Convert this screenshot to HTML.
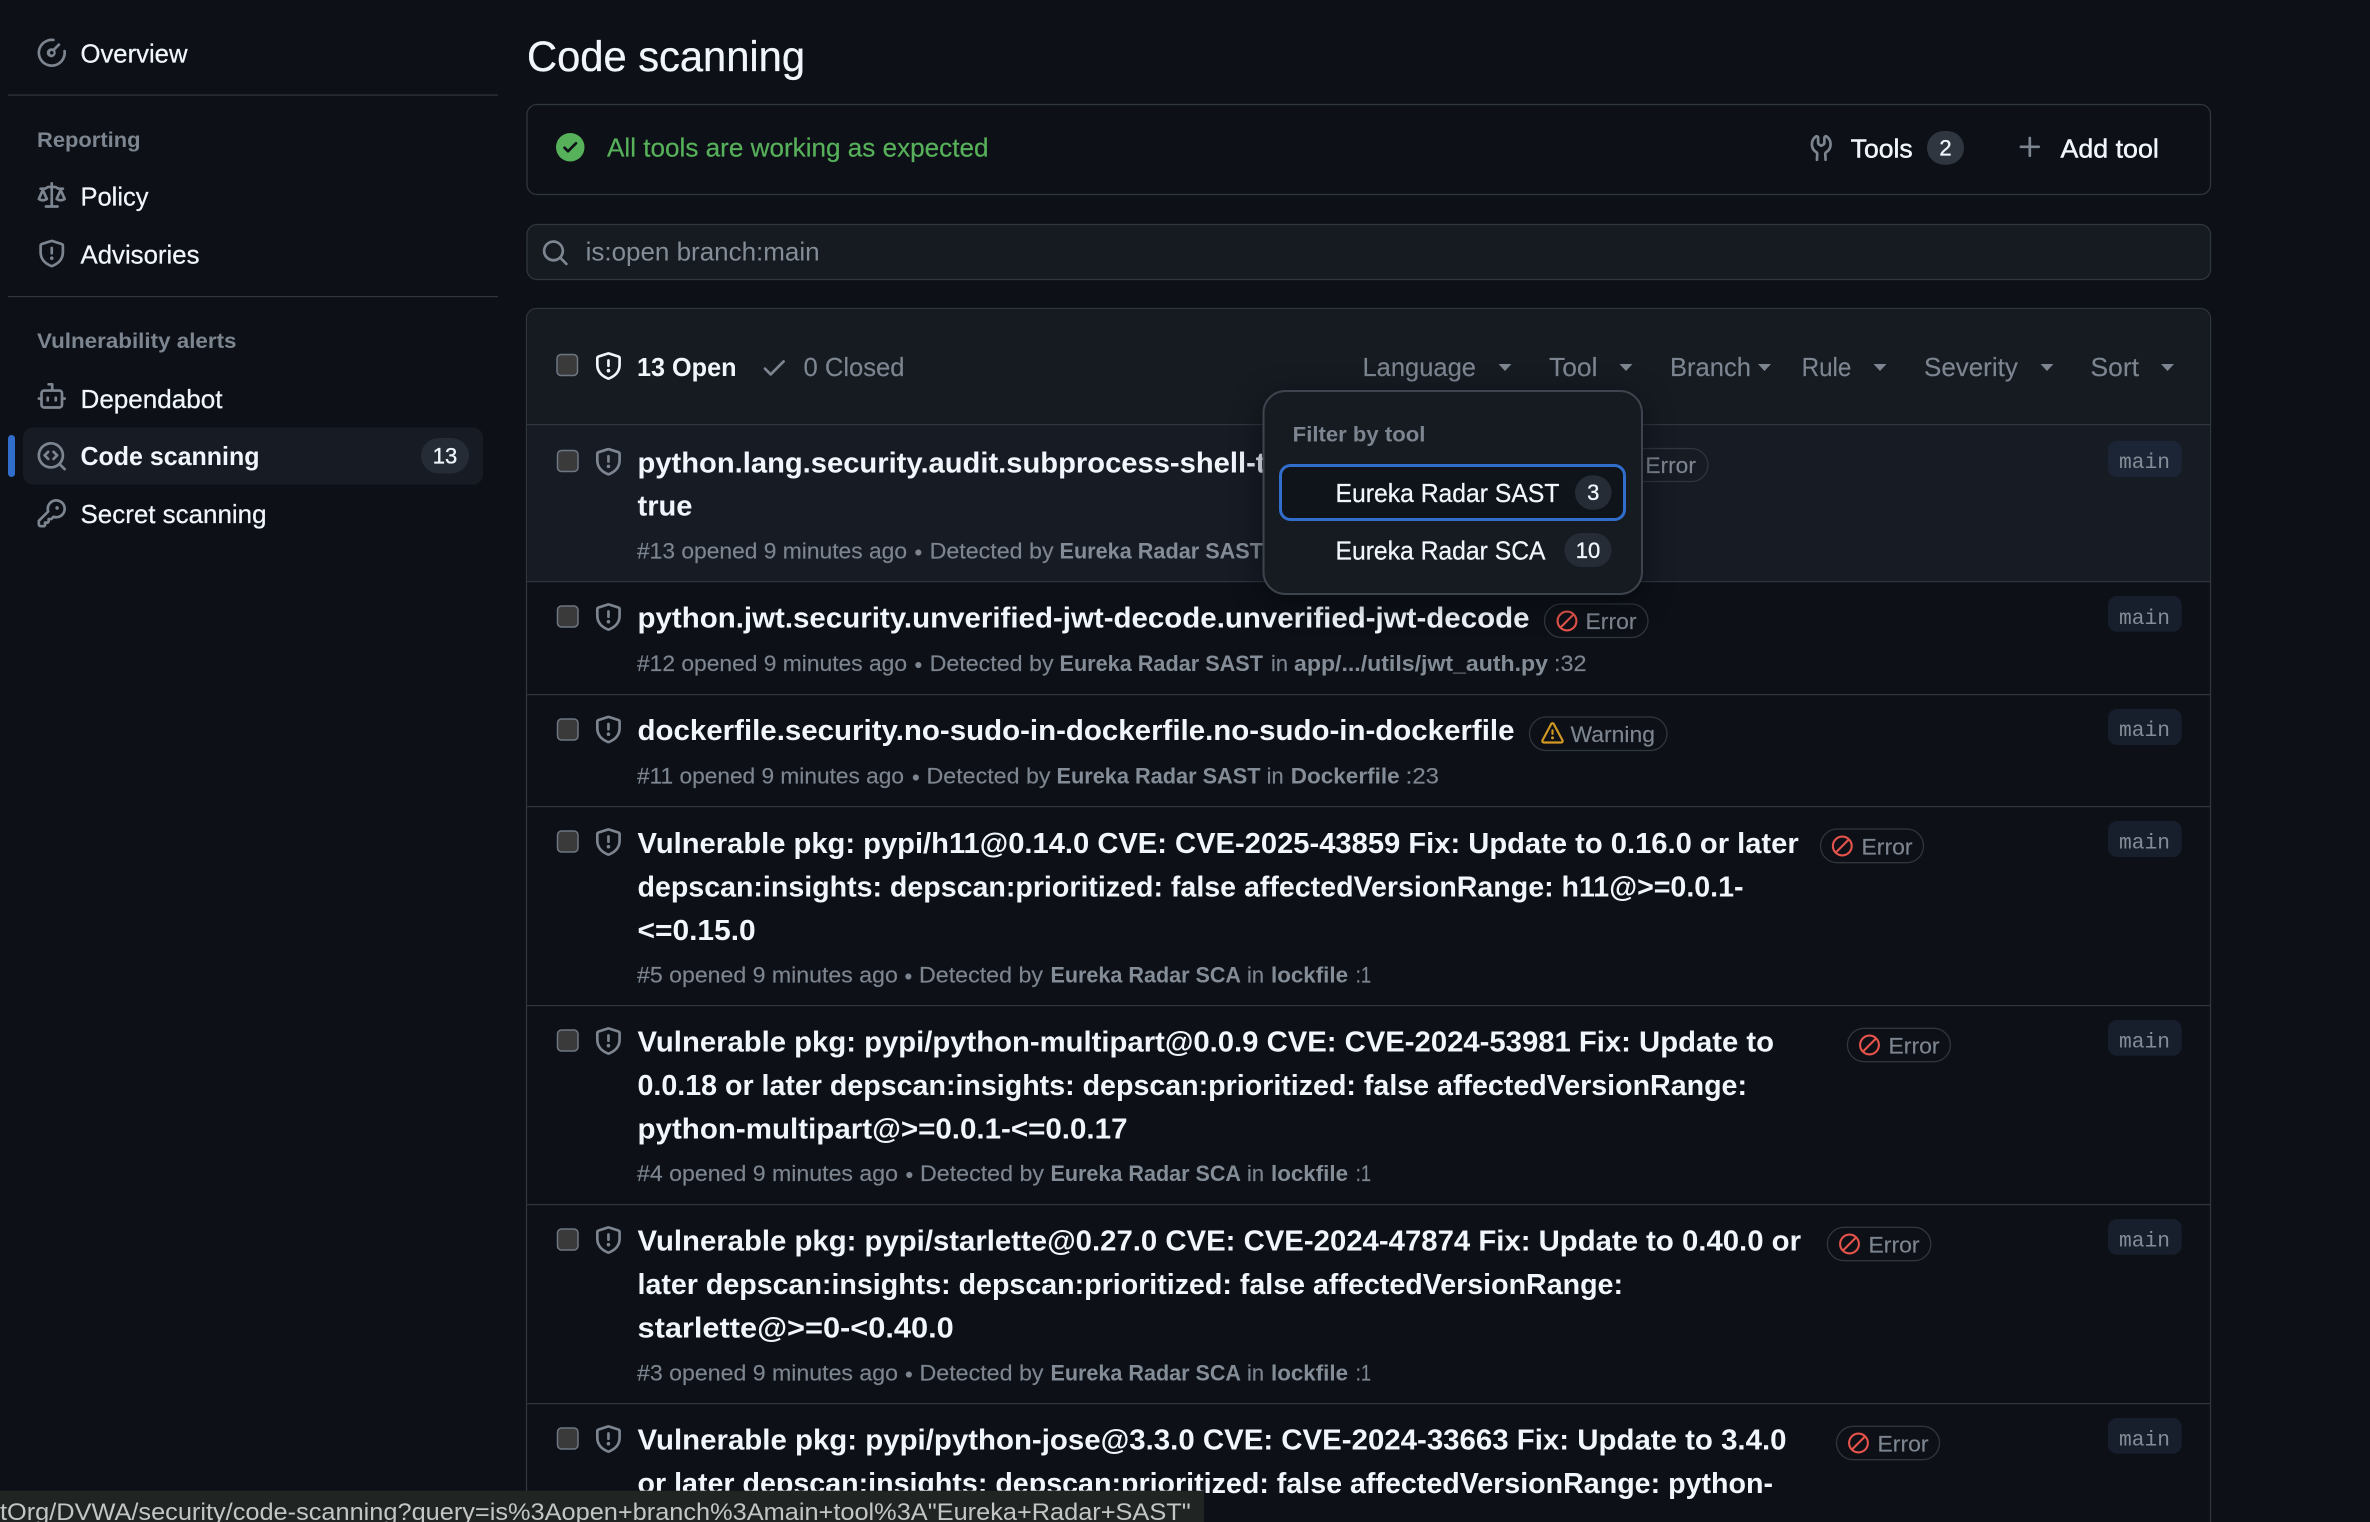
<!DOCTYPE html>
<html><head><meta charset="utf-8"><title>Code scanning</title>
<style>
html,body{margin:0;padding:0;background:#0d1117;width:2370px;height:1522px;overflow:hidden}
svg{display:block}
text{font-family:"Liberation Sans",sans-serif;white-space:pre}
.s{font-size:26px;fill:#f0f6fc;stroke:#f0f6fc;stroke-width:.25px}
.sb{font-size:26px;font-weight:700;fill:#f0f6fc}
.h{font-size:21.5px;font-weight:700;fill:#7d8590}
.b{font-size:26px;fill:#f0f6fc;stroke:#f0f6fc;stroke-width:.45px}
.g{font-size:26px;fill:#7d8590;stroke:#7d8590;stroke-width:.15px}
.t{font-size:29px;font-weight:700;fill:#f0f6fc}
.m{font-size:22px;fill:#7d8590;stroke:#7d8590;stroke-width:.15px}
.mb{font-size:22px;font-weight:700;fill:#848d97}
.c{font-size:22px;fill:#f0f6fc;text-anchor:middle;stroke:#f0f6fc;stroke-width:.35px}
.p{font-size:22px;fill:#7d8590;stroke:#7d8590;stroke-width:.15px}
.mono{font-family:"Liberation Mono",monospace;font-size:21.3px;fill:#848d97}
.i{fill:#7d8590}
.w{fill:#f0f6fc}
</style></head>
<body>
<svg width="2370" height="1522" viewBox="0 0 2370 1522" xmlns="http://www.w3.org/2000/svg">
<defs>
<symbol id="law" viewBox="0 0 16 16"><path d="M8.75.75V2h.985c.304 0 .603.08.867.231l1.29.736c.038.022.08.033.124.033h2.234a.75.75 0 0 1 0 1.5h-.427l2.111 4.692a.75.75 0 0 1-.154.838l-.53-.53.529.531-.001.002-.002.002-.006.006-.006.005-.01.01-.045.04c-.21.176-.441.327-.686.45C14.556 10.78 13.88 11 13 11a4.498 4.498 0 0 1-2.023-.454 3.544 3.544 0 0 1-.686-.45l-.045-.04-.016-.015-.006-.006-.004-.004v-.001a.75.75 0 0 1-.154-.838L12.178 4.5h-.162c-.305 0-.604-.079-.868-.231l-1.29-.736a.245.245 0 0 0-.124-.033H8.75V13h2.5a.75.75 0 0 1 0 1.5h-6.5a.75.75 0 0 1 0-1.5h2.5V3.5h-.984a.245.245 0 0 0-.124.033l-1.289.737c-.265.15-.564.23-.869.23h-.162l2.112 4.692a.75.75 0 0 1-.154.838l-.53-.53.529.531-.001.002-.002.002-.006.006-.016.015-.045.04c-.21.176-.441.327-.686.45C4.556 10.78 3.88 11 3 11a4.498 4.498 0 0 1-2.023-.454 3.544 3.544 0 0 1-.686-.45l-.045-.04-.016-.015-.006-.006-.004-.004v-.001a.75.75 0 0 1-.154-.838L2.178 4.5H1.75a.75.75 0 0 1 0-1.5h2.234a.249.249 0 0 0 .125-.033l1.288-.737c.265-.15.564-.23.869-.23h.984V.75a.75.75 0 0 1 1.5 0Zm2.945 8.477c.285.135.718.273 1.305.273s1.02-.138 1.305-.273L13 6.327Zm-10 0c.285.135.718.273 1.305.273s1.02-.138 1.305-.273L3 6.327Z"/></symbol>
<symbol id="shield" viewBox="0 0 16 16"><path d="M7.467.133a1.748 1.748 0 0 1 1.066 0l5.25 1.68A1.75 1.75 0 0 1 15 3.48V7c0 1.566-.32 3.182-1.303 4.682-.983 1.498-2.585 2.813-5.032 3.855a1.697 1.697 0 0 1-1.33 0c-2.447-1.042-4.049-2.357-5.032-3.855C1.32 10.182 1 8.566 1 7V3.48a1.75 1.75 0 0 1 1.217-1.667Zm.61 1.429a.25.25 0 0 0-.153 0l-5.25 1.68a.25.25 0 0 0-.174.238V7c0 1.358.275 2.666 1.057 3.86.784 1.194 2.121 2.34 4.366 3.297a.196.196 0 0 0 .154 0c2.245-.956 3.582-2.104 4.366-3.298C13.225 9.666 13.5 8.36 13.5 7V3.48a.251.251 0 0 0-.174-.237l-5.25-1.68ZM8.75 4.75v3a.75.75 0 0 1-1.5 0v-3a.75.75 0 0 1 1.5 0ZM9 10.5a1 1 0 1 1-2 0 1 1 0 0 1 2 0Z"/></symbol>
<symbol id="bot" viewBox="0 0 16 16"><path d="M5.75 7.5a.75.75 0 0 1 .75.75v1.5a.75.75 0 0 1-1.5 0v-1.5a.75.75 0 0 1 .75-.75Zm5.25.75a.75.75 0 0 0-1.5 0v1.5a.75.75 0 0 0 1.5 0v-1.5Z"/><path d="M6.25 0h2A.75.75 0 0 1 9 .75V3.5h3.25a2.25 2.25 0 0 1 2.25 2.25V8h.75a.75.75 0 0 1 0 1.5h-.75v2.75a2.25 2.25 0 0 1-2.25 2.25h-8.5a2.25 2.25 0 0 1-2.25-2.25V9.5H.75a.75.75 0 0 1 0-1.5h.75V5.75A2.25 2.25 0 0 1 3.75 3.5H7.5v-2H6.25a.75.75 0 0 1 0-1.5ZM3 5.75v6.5c0 .414.336.75.75.75h8.5a.75.75 0 0 0 .75-.75v-6.5a.75.75 0 0 0-.75-.75h-8.5a.75.75 0 0 0-.75.75Z"/></symbol>
<symbol id="scan" viewBox="0 0 16 16"><path d="M8.47 4.97a.75.75 0 0 0 0 1.06L9.94 7.5 8.47 8.97a.75.75 0 1 0 1.06 1.06l2-2a.75.75 0 0 0 0-1.06l-2-2a.75.75 0 0 0-1.06 0ZM6.53 6.03a.75.75 0 0 0-1.06-1.06l-2 2a.75.75 0 0 0 0 1.06l2 2a.75.75 0 1 0 1.06-1.06L5.06 7.5l1.47-1.47Z"/><path d="M12.246 13.307a7.501 7.501 0 1 1 1.06-1.06l2.474 2.473a.749.749 0 0 1-.326 1.275.749.749 0 0 1-.734-.215ZM1.5 7.5a6.002 6.002 0 0 0 3.608 5.504 6.002 6.002 0 0 0 6.486-1.117.75.75 0 0 1 .293-.293A6 6 0 1 0 1.5 7.5Z"/></symbol>
<symbol id="key" viewBox="0 0 16 16"><path d="M10.5 0a5.499 5.499 0 1 1-1.288 10.848l-.932.932a.749.749 0 0 1-.53.22H7v.75a.749.749 0 0 1-.22.53l-.5.5a.749.749 0 0 1-.53.22H5v.75a.749.749 0 0 1-.22.53l-.5.5a.749.749 0 0 1-.53.22h-2A1.75 1.75 0 0 1 0 14.25v-2c0-.199.079-.389.22-.53l4.932-4.932A5.5 5.5 0 0 1 10.5 0Zm-4 5.5c-.001.431.069.86.205 1.269a.75.75 0 0 1-.181.768L1.5 12.56v1.69c0 .138.112.25.25.25h1.69l.06-.06v-1.19a.75.75 0 0 1 .75-.75h1.19l.06-.06v-1.19a.75.75 0 0 1 .75-.75h1.19l1.023-1.025a.75.75 0 0 1 .768-.18A4 4 0 1 0 6.5 5.5ZM11 6a1 1 0 1 1 0-2 1 1 0 0 1 0 2Z"/></symbol>
<symbol id="meter" viewBox="0 0 16 16"><path d="M8 1.5a6.5 6.5 0 1 0 6.445 5.649.75.75 0 1 1 1.488-.194A8 8 0 1 1 9.045.068a.75.75 0 1 1-.194 1.488A6.5 6.5 0 0 0 8 1.5Z"/><path d="M8 5.5a2.5 2.5 0 0 1 .8.13l2.67-2.67a.75.75 0 1 1 1.06 1.06l-2.67 2.67A2.5 2.5 0 1 1 8 5.5Zm0 1.5a1 1 0 1 0 0 2 1 1 0 0 0 0-2Z"/></symbol>
<symbol id="checkc" viewBox="0 0 16 16"><path d="M8 16A8 8 0 1 1 8 0a8 8 0 0 1 0 16Zm3.78-9.72a.751.751 0 0 0-.018-1.042.751.751 0 0 0-1.042-.018L6.75 9.19 5.28 7.72a.751.751 0 0 0-1.042.018.751.751 0 0 0-.018 1.042l2 2a.75.75 0 0 0 1.06 0Z"/></symbol>
<symbol id="search" viewBox="0 0 16 16"><path d="M10.68 11.74a6 6 0 0 1-7.922-8.982 6 6 0 0 1 8.982 7.922l3.04 3.04a.749.749 0 0 1-.326 1.275.749.749 0 0 1-.734-.215ZM11.5 7a4.499 4.499 0 1 0-8.997 0A4.499 4.499 0 0 0 11.5 7Z"/></symbol>
<symbol id="check" viewBox="0 0 16 16"><path d="M13.78 4.22a.75.75 0 0 1 0 1.06l-7.25 7.25a.75.75 0 0 1-1.06 0L2.22 9.28a.751.751 0 0 1 .018-1.042.751.751 0 0 1 1.042-.018L6 10.94l6.72-6.72a.75.75 0 0 1 1.06 0Z"/></symbol>
<symbol id="tools" viewBox="0 0 16 16"><path d="M5.433 2.304A4.492 4.492 0 0 0 3.5 6c0 1.598.832 3.002 2.09 3.802.518.328.929.923.902 1.64v.008l-.164 3.337a.75.75 0 1 1-1.498-.073l.163-3.33c.002-.085-.05-.216-.207-.316A5.996 5.996 0 0 1 2 6a5.993 5.993 0 0 1 2.567-4.92 1.482 1.482 0 0 1 1.673-.04c.462.296.76.827.76 1.423v2.82c0 .082.041.16.11.206l.75.51a.25.25 0 0 0 .28 0l.75-.51A.249.249 0 0 0 9 5.282V2.463c0-.596.298-1.127.76-1.423a1.482 1.482 0 0 1 1.673.04A5.993 5.993 0 0 1 14 6a5.996 5.996 0 0 1-2.786 5.068c-.157.1-.209.23-.207.315l.163 3.33a.752.752 0 0 1-1.094.714.75.75 0 0 1-.404-.64l-.164-3.345c-.027-.717.384-1.312.902-1.64A4.495 4.495 0 0 0 12.5 6a4.492 4.492 0 0 0-1.933-3.696c-.024-.017-.067-.067-.067.159v2.82c0 .58-.286 1.122-.766 1.447l-.75.51a1.75 1.75 0 0 1-1.968 0l-.75-.51A1.75 1.75 0 0 1 5.5 5.282V2.463c0-.226-.043-.176-.067-.159Z"/></symbol>
<symbol id="plus" viewBox="0 0 16 16"><path d="M7.75 2a.75.75 0 0 1 .75.75V7h4.25a.75.75 0 0 1 0 1.5H8.5v4.25a.75.75 0 0 1-1.5 0V8.5H2.75a.75.75 0 0 1 0-1.5H7V2.75A.75.75 0 0 1 7.75 2Z"/></symbol>
<symbol id="alert" viewBox="0 0 16 16"><path d="M6.457 1.047c.659-1.234 2.427-1.234 3.086 0l6.082 11.378A1.75 1.75 0 0 1 14.082 15H1.918a1.75 1.75 0 0 1-1.543-2.575Zm1.763.707a.25.25 0 0 0-.44 0L1.698 13.132a.25.25 0 0 0 .22.368h12.164a.25.25 0 0 0 .22-.368Zm.53 3.996v2.5a.75.75 0 0 1-1.5 0v-2.5a.75.75 0 0 1 1.5 0ZM9 11a1 1 0 1 1-2 0 1 1 0 0 1 2 0Z"/></symbol>
<g id="err"><circle cx="0" cy="0" r="9.4" fill="none" stroke="#e5534b" stroke-width="2.1"/><line x1="-6.6" y1="6.6" x2="6.6" y2="-6.6" stroke="#e5534b" stroke-width="2.1"/></g>
</defs>

<rect width="2370" height="1522" fill="#0d1117"/>

<!-- Sidebar -->
<use href="#meter" class="i" x="37.5" y="38.5" width="28.5" height="28.5"/>
<text class="s" x="80.5" y="62.5" textLength="107" lengthAdjust="spacingAndGlyphs">Overview</text>
<rect x="8" y="94.5" width="490" height="1.2" fill="#30363d"/>
<text class="h" x="37" y="147" textLength="103.5" lengthAdjust="spacingAndGlyphs">Reporting</text>
<use href="#law" class="i" x="37.5" y="182" width="28.5" height="28.5"/>
<text class="s" x="80.5" y="205.7" textLength="68" lengthAdjust="spacingAndGlyphs">Policy</text>
<use href="#shield" class="i" x="37.5" y="239.5" width="28.5" height="28.5"/>
<text class="s" x="80.5" y="263.5" textLength="119" lengthAdjust="spacingAndGlyphs">Advisories</text>
<rect x="8" y="296" width="490" height="1.2" fill="#30363d"/>
<text class="h" x="37" y="348" textLength="199.5" lengthAdjust="spacingAndGlyphs">Vulnerability alerts</text>
<use href="#bot" class="i" x="37.5" y="383" width="28.5" height="28.5"/>
<text class="s" x="80.5" y="408" textLength="142" lengthAdjust="spacingAndGlyphs">Dependabot</text>
<rect x="23" y="427.5" width="460" height="57" rx="10" fill="#171b24"/>
<rect x="8" y="435" width="7" height="42" rx="3.5" fill="#316dca"/>
<use href="#scan" class="i" x="37.5" y="442" width="28.5" height="28.5"/>
<text class="sb" x="80.5" y="465" textLength="179" lengthAdjust="spacingAndGlyphs">Code scanning</text>
<rect x="421" y="438" width="48" height="35.5" rx="17.75" fill="#262c36"/>
<text class="c" x="445" y="463.5">13</text>
<use href="#key" class="i" x="37.5" y="499" width="28.5" height="28.5"/>
<text class="s" x="80.5" y="523" textLength="186" lengthAdjust="spacingAndGlyphs">Secret scanning</text>

<!-- Header -->
<text x="527" y="71" font-size="42.5" fill="#f0f6fc" stroke="#f0f6fc" stroke-width=".3" textLength="278" lengthAdjust="spacingAndGlyphs">Code scanning</text>

<rect x="527" y="104.5" width="1683.5" height="90" rx="10" fill="none" stroke="#30363d" stroke-width="1.3"/>
<use href="#checkc" fill="#57b05a" x="556" y="133" width="28.5" height="28.5"/>
<text x="607" y="156.7" font-size="26" fill="#57b05a" stroke="#57b05a" stroke-width=".2" textLength="381.5" lengthAdjust="spacingAndGlyphs">All tools are working as expected</text>
<use href="#tools" class="i" x="1807" y="133.5" width="28.5" height="28.5"/>
<text class="b" x="1850.7" y="157.5" textLength="62" lengthAdjust="spacingAndGlyphs">Tools</text>
<rect x="1927" y="131" width="37" height="33.7" rx="16.8" fill="#30363f"/>
<text class="c" x="1945.5" y="155.5">2</text>
<use href="#plus" class="i" x="2016" y="133" width="28.5" height="28.5"/>
<text class="b" x="2060.5" y="157.5" textLength="98.3" lengthAdjust="spacingAndGlyphs">Add tool</text>

<rect x="527" y="224.5" width="1683.5" height="55" rx="10" fill="#161b22" stroke="#30363d" stroke-width="1.3"/>
<use href="#search" class="i" x="541" y="238.5" width="28.5" height="28.5"/>
<text x="585.6" y="260.7" font-size="26" fill="#848d97" textLength="234" lengthAdjust="spacingAndGlyphs">is:open branch:main</text>

<!-- List container -->
<path d="M526.5 1522V318.5a10 10 0 0 1 10-10H2200.5a10 10 0 0 1 10 10V1522" fill="none" stroke="#30363d" stroke-width="1.3"/>
<path d="M527.2 424.4V318.5a9.3 9.3 0 0 1 9.3-9.3H2200.5a9.3 9.3 0 0 1 9.3 9.3V424.4Z" fill="#161b22"/>
<rect x="527.2" y="425" width="1682.6" height="156" fill="#171b24"/>
<g fill="#30363d">
<rect x="527" y="424" width="1683.5" height="1.2"/>
<rect x="527" y="581" width="1683.5" height="1.2"/>
<rect x="527" y="694" width="1683.5" height="1.2"/>
<rect x="527" y="806" width="1683.5" height="1.2"/>
<rect x="527" y="1005" width="1683.5" height="1.2"/>
<rect x="527" y="1204" width="1683.5" height="1.2"/>
<rect x="527" y="1403" width="1683.5" height="1.2"/>
</g>

<!-- List header -->
<rect x="557" y="354.5" width="20.5" height="21" rx="4" fill="#3a3a3a" stroke="#6e7681" stroke-width="1.5"/>
<use href="#shield" class="w" x="594.2" y="352" width="28.5" height="28.5"/>
<text x="637" y="376" font-size="26" font-weight="700" fill="#f0f6fc" textLength="99.5" lengthAdjust="spacingAndGlyphs">13 Open</text>
<use href="#check" class="i" x="760" y="353" width="28.5" height="28.5"/>
<text class="g" x="803.5" y="376" textLength="101" lengthAdjust="spacingAndGlyphs">0 Closed</text>

<text class="g" x="1362.5" y="376" textLength="113.5" lengthAdjust="spacingAndGlyphs">Language</text>
<polygon class="i" points="1498.5,364 1511.5,364 1505,371"/>
<text class="g" x="1549" y="376" textLength="48.5" lengthAdjust="spacingAndGlyphs">Tool</text>
<polygon class="i" points="1619.5,364 1632.5,364 1626,371"/>
<text class="g" x="1670" y="376" textLength="81" lengthAdjust="spacingAndGlyphs">Branch</text>
<polygon class="i" points="1758,364 1771,364 1764.5,371"/>
<text class="g" x="1801.6" y="376" textLength="49.8" lengthAdjust="spacingAndGlyphs">Rule</text>
<polygon class="i" points="1873.5,364 1886.5,364 1880,371"/>
<text class="g" x="1924" y="376" textLength="93.8" lengthAdjust="spacingAndGlyphs">Severity</text>
<polygon class="i" points="2040.5,364 2053.5,364 2047,371"/>
<text class="g" x="2090.5" y="376" textLength="48.5" lengthAdjust="spacingAndGlyphs">Sort</text>
<polygon class="i" points="2161,364 2174,364 2167.5,371"/>

<!-- Row checkboxes, shields -->
<g fill="#3a3a3a" stroke="#6e7681" stroke-width="1.5">
<rect x="557.5" y="450.5" width="20.5" height="21" rx="4"/>
<rect x="557.5" y="606" width="20.5" height="21" rx="4"/>
<rect x="557.5" y="719" width="20.5" height="21" rx="4"/>
<rect x="557.5" y="831" width="20.5" height="21" rx="4"/>
<rect x="557.5" y="1030" width="20.5" height="21" rx="4"/>
<rect x="557.5" y="1229" width="20.5" height="21" rx="4"/>
<rect x="557.5" y="1428" width="20.5" height="21" rx="4"/>
</g>
<g class="i">
<use href="#shield" x="594.2" y="447.7" width="28.5" height="28.5"/>
<use href="#shield" x="594.2" y="603" width="28.5" height="28.5"/>
<use href="#shield" x="594.2" y="715.5" width="28.5" height="28.5"/>
<use href="#shield" x="594.2" y="828" width="28.5" height="28.5"/>
<use href="#shield" x="594.2" y="1027" width="28.5" height="28.5"/>
<use href="#shield" x="594.2" y="1226" width="28.5" height="28.5"/>
<use href="#shield" x="594.2" y="1425" width="28.5" height="28.5"/>
</g>

<!-- Row 1 -->
<text class="t" x="637.5" y="472.3" textLength="628" lengthAdjust="spacingAndGlyphs">python.lang.security.audit.subprocess-shell-t</text>
<text class="t" x="637.5" y="515.7" textLength="55" lengthAdjust="spacingAndGlyphs">true</text>
<text class="m" x="637" y="558.3" textLength="270" lengthAdjust="spacingAndGlyphs">#13 opened 9 minutes ago</text>
<text class="m" x="914.5" y="559.8">•</text>
<text class="m" x="929.6" y="558.3" textLength="124" lengthAdjust="spacingAndGlyphs">Detected by</text>
<text class="mb" x="1059.5" y="558.3" textLength="203.5" lengthAdjust="spacingAndGlyphs">Eureka Radar SAST</text>
<rect x="1605" y="448.5" width="103" height="33" rx="16.5" fill="none" stroke="#30363d" stroke-width="1.3"/>
<text class="p" x="1645.4" y="472.8" textLength="50.5" lengthAdjust="spacingAndGlyphs">Error</text>
<rect x="2108" y="440.7" width="73.7" height="36.3" rx="9" fill="#1c2535"/>
<text class="mono" x="2119" y="468.2" textLength="51" lengthAdjust="spacingAndGlyphs">main</text>

<!-- Row 2 -->
<text class="t" x="637.5" y="627.3" textLength="892" lengthAdjust="spacingAndGlyphs">python.jwt.security.unverified-jwt-decode.unverified-jwt-decode</text>
<text class="m" x="637" y="671" textLength="270" lengthAdjust="spacingAndGlyphs">#12 opened 9 minutes ago</text>
<text class="m" x="914.5" y="672.5">•</text>
<text class="m" x="929.6" y="671" textLength="124" lengthAdjust="spacingAndGlyphs">Detected by</text>
<text class="mb" x="1059.5" y="671" textLength="203.5" lengthAdjust="spacingAndGlyphs">Eureka Radar SAST</text>
<text class="m" x="1271" y="671" textLength="17" lengthAdjust="spacingAndGlyphs">in</text>
<text class="mb" x="1294" y="671" textLength="254" lengthAdjust="spacingAndGlyphs">app/.../utils/jwt_auth.py</text>
<text class="m" x="1554" y="671" textLength="32.5" lengthAdjust="spacingAndGlyphs">:32</text>
<rect x="1544.5" y="604" width="103.5" height="33.5" rx="16.7" fill="none" stroke="#30363d" stroke-width="1.3"/>
<use href="#err" x="1567" y="621"/>
<text class="p" x="1585.5" y="629" textLength="51" lengthAdjust="spacingAndGlyphs">Error</text>
<rect x="2108" y="596" width="73.7" height="35.7" rx="9" fill="#171e2c"/>
<text class="mono" x="2119" y="624" textLength="51" lengthAdjust="spacingAndGlyphs">main</text>

<!-- Row 3 -->
<text class="t" x="637.5" y="740" textLength="877" lengthAdjust="spacingAndGlyphs">dockerfile.security.no-sudo-in-dockerfile.no-sudo-in-dockerfile</text>
<text class="m" x="637" y="783.3" textLength="267" lengthAdjust="spacingAndGlyphs">#11 opened 9 minutes ago</text>
<text class="m" x="912" y="784.8">•</text>
<text class="m" x="926.5" y="783.3" textLength="124" lengthAdjust="spacingAndGlyphs">Detected by</text>
<text class="mb" x="1056.5" y="783.3" textLength="204" lengthAdjust="spacingAndGlyphs">Eureka Radar SAST</text>
<text class="m" x="1266.6" y="783.3" textLength="17" lengthAdjust="spacingAndGlyphs">in</text>
<text class="mb" x="1290.8" y="783.3" textLength="108.8" lengthAdjust="spacingAndGlyphs">Dockerfile</text>
<text class="m" x="1405.7" y="783.3" textLength="33.3" lengthAdjust="spacingAndGlyphs">:23</text>
<rect x="1529.5" y="717" width="137.5" height="33.5" rx="16.7" fill="none" stroke="#30363d" stroke-width="1.3"/>
<use href="#alert" fill="#d29922" x="1541" y="722" width="23" height="23"/>
<text class="p" x="1570.5" y="742" textLength="84.5" lengthAdjust="spacingAndGlyphs">Warning</text>
<rect x="2108" y="709" width="73.7" height="36" rx="9" fill="#171e2c"/>
<text class="mono" x="2119" y="736" textLength="51" lengthAdjust="spacingAndGlyphs">main</text>

<!-- Row 4 -->
<text class="t" x="637.5" y="853" textLength="1161.2" lengthAdjust="spacingAndGlyphs">Vulnerable pkg: pypi/h11@0.14.0 CVE: CVE-2025-43859 Fix: Update to 0.16.0 or later</text>
<text class="t" x="637.5" y="896.3" textLength="1106" lengthAdjust="spacingAndGlyphs">depscan:insights: depscan:prioritized: false affectedVersionRange: h11@&gt;=0.0.1-</text>
<text class="t" x="637.5" y="939.8" textLength="118.2" lengthAdjust="spacingAndGlyphs">&lt;=0.15.0</text>
<text class="m" x="637" y="982.5" textLength="260.8" lengthAdjust="spacingAndGlyphs">#5 opened 9 minutes ago</text>
<text class="m" x="904.5" y="984">•</text>
<text class="m" x="919" y="982.5" textLength="124" lengthAdjust="spacingAndGlyphs">Detected by</text>
<text class="mb" x="1050.5" y="982.5" textLength="190.5" lengthAdjust="spacingAndGlyphs">Eureka Radar SCA</text>
<text class="m" x="1247" y="982.5" textLength="17" lengthAdjust="spacingAndGlyphs">in</text>
<text class="mb" x="1271" y="982.5" textLength="77" lengthAdjust="spacingAndGlyphs">lockfile</text>
<text class="m" x="1355.8" y="982.5" textLength="15.2" lengthAdjust="spacingAndGlyphs">:1</text>
<rect x="1820.5" y="829" width="103" height="33.7" rx="16.8" fill="none" stroke="#30363d" stroke-width="1.3"/>
<use href="#err" x="1842.3" y="846"/>
<text class="p" x="1861.5" y="854.3" textLength="51" lengthAdjust="spacingAndGlyphs">Error</text>
<rect x="2108" y="821" width="73.7" height="36" rx="9" fill="#171e2c"/>
<text class="mono" x="2119" y="848.5" textLength="51" lengthAdjust="spacingAndGlyphs">main</text>

<!-- Row 5 -->
<text class="t" x="637.5" y="1051.3" textLength="1136.5" lengthAdjust="spacingAndGlyphs">Vulnerable pkg: pypi/python-multipart@0.0.9 CVE: CVE-2024-53981 Fix: Update to</text>
<text class="t" x="637.5" y="1095" textLength="1109.5" lengthAdjust="spacingAndGlyphs">0.0.18 or later depscan:insights: depscan:prioritized: false affectedVersionRange:</text>
<text class="t" x="637.5" y="1138.5" textLength="490" lengthAdjust="spacingAndGlyphs">python-multipart@&gt;=0.0.1-&lt;=0.0.17</text>
<text class="m" x="637" y="1181" textLength="261" lengthAdjust="spacingAndGlyphs">#4 opened 9 minutes ago</text>
<text class="m" x="905.5" y="1182.5">•</text>
<text class="m" x="920" y="1181" textLength="124" lengthAdjust="spacingAndGlyphs">Detected by</text>
<text class="mb" x="1050.5" y="1181" textLength="190.5" lengthAdjust="spacingAndGlyphs">Eureka Radar SCA</text>
<text class="m" x="1247" y="1181" textLength="17" lengthAdjust="spacingAndGlyphs">in</text>
<text class="mb" x="1271" y="1181" textLength="77" lengthAdjust="spacingAndGlyphs">lockfile</text>
<text class="m" x="1355.8" y="1181" textLength="15.2" lengthAdjust="spacingAndGlyphs">:1</text>
<rect x="1847.4" y="1028.3" width="103" height="33.4" rx="16.7" fill="none" stroke="#30363d" stroke-width="1.3"/>
<use href="#err" x="1869.5" y="1045"/>
<text class="p" x="1888.5" y="1053.3" textLength="51" lengthAdjust="spacingAndGlyphs">Error</text>
<rect x="2108" y="1020" width="73.7" height="35.7" rx="9" fill="#171e2c"/>
<text class="mono" x="2119" y="1047.3" textLength="51" lengthAdjust="spacingAndGlyphs">main</text>

<!-- Row 6 -->
<text class="t" x="637.5" y="1250.3" textLength="1163.5" lengthAdjust="spacingAndGlyphs">Vulnerable pkg: pypi/starlette@0.27.0 CVE: CVE-2024-47874 Fix: Update to 0.40.0 or</text>
<text class="t" x="637.5" y="1294" textLength="985.5" lengthAdjust="spacingAndGlyphs">later depscan:insights: depscan:prioritized: false affectedVersionRange:</text>
<text class="t" x="637.5" y="1337.5" textLength="316.2" lengthAdjust="spacingAndGlyphs">starlette@&gt;=0-&lt;0.40.0</text>
<text class="m" x="637" y="1380.5" textLength="261" lengthAdjust="spacingAndGlyphs">#3 opened 9 minutes ago</text>
<text class="m" x="905" y="1382">•</text>
<text class="m" x="919.5" y="1380.5" textLength="124" lengthAdjust="spacingAndGlyphs">Detected by</text>
<text class="mb" x="1050.5" y="1380.5" textLength="190.5" lengthAdjust="spacingAndGlyphs">Eureka Radar SCA</text>
<text class="m" x="1247" y="1380.5" textLength="17" lengthAdjust="spacingAndGlyphs">in</text>
<text class="mb" x="1271" y="1380.5" textLength="77" lengthAdjust="spacingAndGlyphs">lockfile</text>
<text class="m" x="1355.8" y="1380.5" textLength="15.2" lengthAdjust="spacingAndGlyphs">:1</text>
<rect x="1827.4" y="1227.3" width="103.4" height="33.4" rx="16.7" fill="none" stroke="#30363d" stroke-width="1.3"/>
<use href="#err" x="1849.5" y="1244"/>
<text class="p" x="1868.5" y="1252.3" textLength="51" lengthAdjust="spacingAndGlyphs">Error</text>
<rect x="2108" y="1219" width="73.7" height="35.7" rx="9" fill="#171e2c"/>
<text class="mono" x="2119" y="1246.3" textLength="51" lengthAdjust="spacingAndGlyphs">main</text>

<!-- Row 7 -->
<text class="t" x="637.5" y="1449.5" textLength="1149" lengthAdjust="spacingAndGlyphs">Vulnerable pkg: pypi/python-jose@3.3.0 CVE: CVE-2024-33663 Fix: Update to 3.4.0</text>
<text class="t" x="637.5" y="1493" textLength="1135.5" lengthAdjust="spacingAndGlyphs">or later depscan:insights: depscan:prioritized: false affectedVersionRange: python-</text>
<rect x="1836.5" y="1426.3" width="103" height="33.4" rx="16.7" fill="none" stroke="#30363d" stroke-width="1.3"/>
<use href="#err" x="1858.5" y="1443"/>
<text class="p" x="1877.5" y="1451.3" textLength="51" lengthAdjust="spacingAndGlyphs">Error</text>
<rect x="2108" y="1418" width="73.7" height="35.7" rx="9" fill="#171e2c"/>
<text class="mono" x="2119" y="1445.3" textLength="51" lengthAdjust="spacingAndGlyphs">main</text>

<!-- Popup -->
<rect x="1263.5" y="391" width="378.5" height="203" rx="22" fill="#161b22" stroke="#3d444d" stroke-width="2" style="filter:drop-shadow(0 6px 14px rgba(1,4,9,.55))"/>
<text class="h" x="1292.7" y="441.6" textLength="132.7" lengthAdjust="spacingAndGlyphs">Filter by tool</text>
<rect x="1280.5" y="465.5" width="344" height="54" rx="10" fill="#0f131a" stroke="#316dca" stroke-width="3"/>
<text class="s" x="1335.5" y="502" textLength="224" lengthAdjust="spacingAndGlyphs">Eureka Radar SAST</text>
<rect x="1575" y="475.3" width="36.6" height="34.5" rx="17.2" fill="#262c36"/>
<text class="c" x="1593.3" y="500">3</text>
<text class="s" x="1335.5" y="559.3" textLength="210" lengthAdjust="spacingAndGlyphs">Eureka Radar SCA</text>
<rect x="1564.4" y="533" width="47.2" height="34" rx="17" fill="#262c36"/>
<text class="c" x="1588" y="558">10</text>

<!-- Status bar -->
<rect x="0" y="1490.7" width="1204" height="31.3" fill="#202423"/>
<text x="0" y="1520" font-size="24" fill="#c4c6c6" textLength="1190.7" lengthAdjust="spacingAndGlyphs">tOrg/DVWA/security/code-scanning?query=is%3Aopen+branch%3Amain+tool%3A"Eureka+Radar+SAST"</text>
</svg>
</body></html>
